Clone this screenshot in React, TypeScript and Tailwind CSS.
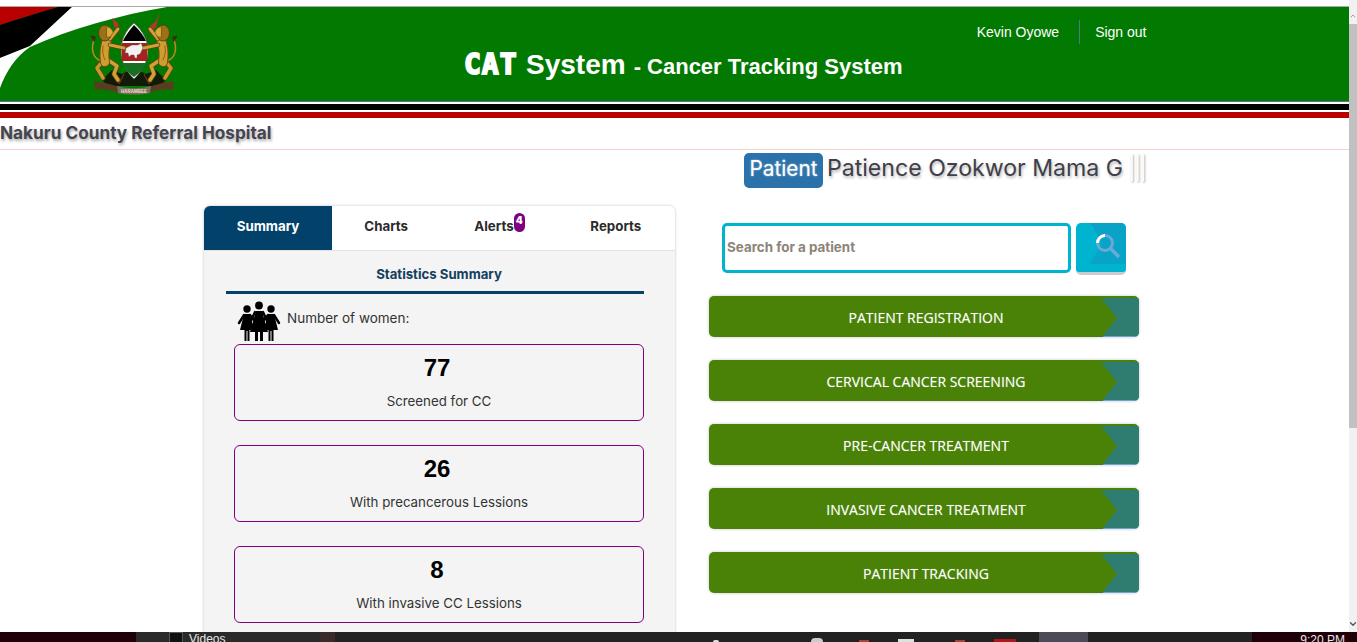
import React from "react";
import { ChevronUp, ChevronDown } from "lucide-react";

const stats = [
  { value: "77", label: "Screened for CC" },
  { value: "26", label: "With precancerous Lessions" },
  { value: "8", label: "With invasive CC Lessions" },
];

const actions = [
  "PATIENT REGISTRATION",
  "CERVICAL CANCER SCREENING",
  "PRE-CANCER TREATMENT",
  "INVASIVE CANCER TREATMENT",
  "PATIENT TRACKING",
];

function Swoosh() {
  return (
    <svg className="absolute left-0 top-0" width="170" height="95" viewBox="0 0 170 95">
      <path d="M0 0H58C38 6 18 12 0 18Z" fill="#b90000" />
      <path d="M58 0H72L30 39C20 43 10 47 0 51V18C18 12 38 6 58 0Z" fill="#000" />
      <path d="M72 0H167C120 8 70 22 30 40C15 50 6 65 0 81V51C10 47 20 43 30 39Z" fill="#fff" />
    </svg>
  );
}

function Lion() {
  return (
    <g fill="none" strokeLinecap="round" strokeLinejoin="round">
      {/* tail */}
      <path d="M13 49C4 46 3 36 6 28" stroke="#b98a1e" strokeWidth="1.500" />
      <path d="M6 29 3 24 7 25Z" fill="#3c2c0c" stroke="#3c2c0c" strokeWidth="1" />
      {/* back legs */}
      <path d="M14 50 9 56 15 66" stroke="#5a430f" strokeWidth="5" />
      <path d="M14 50 9 56 15 66" stroke="#c9962c" strokeWidth="3.500" />
      <path d="M20 48 29 54 26 62 30 68" stroke="#5a430f" strokeWidth="5" />
      <path d="M20 48 29 54 26 62 30 68" stroke="#d2a036" strokeWidth="3.500" />
      {/* body */}
      <path d="M19 28C16 36 16 44 17 50" stroke="#6e4f10" strokeWidth="10" />
      <path d="M19 28C16 36 16 44 17 50" stroke="#cf9d32" strokeWidth="8" />
      <path d="M15 34C14 39 15 44 17 48" stroke="#8c6716" strokeWidth="1" />
      {/* arms */}
      <path d="M22 27 30 17" stroke="#5a430f" strokeWidth="4.500" />
      <path d="M22 27 30 17" stroke="#d2a036" strokeWidth="3" />
      <path d="M22 33 36 36" stroke="#5a430f" strokeWidth="4.500" />
      <path d="M22 33 36 36" stroke="#d2a036" strokeWidth="3" />
      {/* head */}
      <ellipse cx="17" cy="21" rx="6.500" ry="8" fill="#9a7018" stroke="#4e3a0d" strokeWidth="0.800" />
      <path d="M19 15C22 15 25 18 25 21L22 25 19 25Z" fill="#dcaa3c" stroke="#6e4f10" strokeWidth="0.500" />
    </g>
  );
}

function CoatOfArms() {
  return (
    <svg className="mt-[5px] ml-[88px] shrink-0" width="92" height="86" viewBox="0 0 92 86">
      {/* spears */}
      <path d="M27 16 42 44" stroke="#5a3a1a" strokeWidth="1" />
      <path d="M24 6 30 11 31 20 27 17Z" fill="#b5352b" />
      <path d="M72 0 68 9 62 14 63 21 68 15Z" fill="#b5352b" />
      <path d="M63 20 50 44" stroke="#5a3a1a" strokeWidth="1" />
      {/* mountain */}
      <path d="M14 68 24 58 34 62 46 56 58 62 68 58 78 68 72 74H20Z" fill="#101c08" />
      <path d="M36 62 31 72M56 62 61 72" stroke="#b5352b" strokeWidth="0.800" />
      {/* shield */}
      <path d="M46 11C55 19 60 29 60 39C60 49 54 59 46 67C38 59 33 49 33 39C33 29 37 19 46 11Z" fill="#fff" stroke="#555" strokeWidth="0.600" />
      <path d="M46 13C52 19 56 24 58 29H35C37 24 41 19 46 13Z" fill="#000" />
      <path d="M34 31H59C59.500 35 59.500 44 59 49H34C33.500 44 33.500 35 34 31Z" fill="#a8201f" />
      <path d="M35 51H58C56 56 52 61 46 65C40 61 37 56 35 51Z" fill="#17701f" />
      {/* lions */}
      <Lion />
      <g transform="translate(92 0) scale(-1 1)"><Lion /></g>
      <path d="M38 36 44 33 50 33 53 31 55 36 52 42 49 43 49 46H47L46 43 43 43 41 45 40 41 37 41Z" fill="#f1f1f1" stroke="#555" strokeWidth="0.400" />
      {/* ribbon */}
      <g transform="translate(0 -3)">
        <path d="M6 73C14 72 20 75 28 77C40 80 52 80 64 77C72 75 78 72 86 73L85 81C76 79 72 81 64 83C52 86 40 86 28 83C20 81 15 79 7 81Z" fill="#5a3d1e" />
        <path d="M29 77C40 80 52 80 63 77L62 84C52 86 40 86 30 84Z" fill="#7a6f5e" />
        <text x="46" y="83.500" textAnchor="middle" fontSize="4.500" fontWeight="700" fill="#e8e2d0" fontFamily="'Liberation Sans', sans-serif">HARAMBEE</text>
      </g>
    </svg>
  );
}

function WomenIcon() {
  return (
    <svg width="46" height="44" viewBox="0 0 46 44" fill="#000" className="shrink-0">
      <circle cx="11" cy="11" r="3.700" />
      <circle cx="23" cy="7.500" r="3.900" />
      <circle cx="35" cy="11" r="3.700" />
      <g fill="none" stroke="#000" strokeWidth="2.400" strokeLinecap="round">
        <path d="M8 17 3 25M14 17 18 22" />
        <path d="M19 14 14 25M27 14 32 25" />
        <path d="M38 17 43 25M32 17 28 22" />
      </g>
      <path d="M8 16H14L18 32H13.500V43H11.500V33H10.500V43H8.500V32H4Z" />
      <path d="M20 13H26L32 34H27V43H24V34H22V43H19V34H14Z" />
      <path d="M32 16H38L42 32H37.500V43H35.500V33H34.500V43H32.500V32H28Z" />
    </svg>
  );
}

export default function App() {
  return (
    <div className="flex h-[642px] w-[1357px] flex-col overflow-hidden bg-white font-['Inter',sans-serif]">
      <div className="flex min-h-0 flex-1">
        <div className="min-w-0 flex-1 overflow-hidden">
          {/* Header band */}
          <div className="pt-[6px]">
            <header className="relative flex h-[96px] border-t border-b border-t-[#a9a9a9] border-b-[#51788a] bg-[#027a02]">
              <Swoosh />
              <div className="relative flex w-full items-start">
                <CoatOfArms />
                <h1 className="ml-[284px] mt-[41px] flex items-baseline font-['Liberation_Sans',sans-serif] font-bold text-white">
                  <span className="w-[55px] font-['DejaVu_Sans_Mono',monospace] text-[28px] leading-[34px] font-bold tracking-[1px] [-webkit-text-stroke:1.8px_white]">CAT</span>
                  <span className="ml-[7px] text-[28px] leading-[34px]">System</span>
                  <span className="ml-[8px] text-[22px] leading-[34px]">- Cancer Tracking System</span>
                </h1>
                <nav className="ml-[74px] mt-[13px] flex items-center font-['Liberation_Sans',sans-serif] text-[14px] text-white">
                  <span className="pr-[20px] leading-[24px]">Kevin Oyowe</span>
                  <span className="border-l border-[#51788a] pl-[15px] leading-[24px]">Sign out</span>
                </nav>
              </div>
            </header>
            {/* flag stripes */}
            <div className="mt-[2px] h-[6px] bg-black" />
            <div className="mt-[2px] h-[6px] bg-[#b90000]" />
          </div>

          {/* Hospital row */}
          <div className="flex h-[32px] items-center border-b border-[#f6cfcf]">
            <span className="pb-[2px] text-[17.2px] font-bold text-[#45454f] [text-shadow:1px_2px_3px_rgba(0,0,0,0.35)]">
              Nakuru County Referral Hospital
            </span>
          </div>

          {/* Patient heading */}
          <div className="ml-[744px] mt-[3px] flex h-[35px] items-center">
            <span className="flex h-[35px] w-[79px] items-center justify-center rounded-[5px] bg-[#2b72aa] pb-[4px] text-[20.8px] text-white [text-shadow:0_0_2px_rgba(255,255,255,0.6)]">
              Patient
            </span>
            <span className="ml-[4px] pb-[4px] text-[23.1px] text-[#3f3f4a] [text-shadow:1px_2px_3px_rgba(0,0,0,0.3)]">
              Patience Ozokwor Mama G
            </span>
            <span className="ml-[5px] pb-[4px] text-[23px] tracking-[-2px] text-white [text-shadow:1px_1px_2px_rgba(0,0,0,0.35)]">|||</span>
          </div>

          {/* Main columns */}
          <div className="ml-[204px] mt-[18px] flex items-start">
            <section className="w-[471px] overflow-hidden rounded-t-[6px] bg-[#f4f4f4] shadow-[0_0_3px_rgba(0,0,0,0.25)]">
              <div className="grid h-[44px] grid-cols-[128px_1fr_1fr_1fr] items-center bg-white pb-[2px] text-[13.3px] font-bold text-[#2b2b2b]">
                <div className="-mb-[2px] flex h-[44px] items-center justify-center bg-[#02426a] pb-[2px] text-white">Summary</div>
                <div className="pr-[6px] text-center">Charts</div>
                <div className="flex justify-center pr-[8px]">
                  <span>Alerts</span>
                  <span className="-mt-[4px] flex h-[19px] w-[11px] justify-center rounded-full bg-[#800080] text-[10px] leading-[14px] font-black text-white">4</span>
                </div>
                <div className="pr-[4px] text-center">Reports</div>
              </div>
              <div className="border-t border-[#e2e2e2]" />
              <div className="pl-[22px] pr-[31px]">
                <div className="h-[43px] border-b-[3px] border-[#02426a] pl-[8px] pt-[13px] text-center text-[13.2px] leading-[20px] font-bold text-[#13405f]">
                  Statistics Summary
                </div>
                <div className="ml-[10px] mt-[4px] flex h-[46px]">
                  <WomenIcon />
                  <span className="ml-[5px] pt-[11px] text-[13.5px] leading-[18px] text-[#333]">Number of women:</span>
                </div>
                <div className="flex flex-col gap-[24px] pb-[12px] pl-[8px]">
                  {stats.map((stat) => (
                    <div key={stat.label} className="flex h-[77px] flex-col items-center rounded-[6px] border border-[#800080] pt-[7px]">
                      <div className="pr-[4px] font-['Liberation_Sans',sans-serif] text-[24px] leading-[32px] font-bold text-black">{stat.value}</div>
                      <div className="mt-[7px] text-[13.3px] leading-[20px] text-[#333]">{stat.label}</div>
                    </div>
                  ))}
                </div>
              </div>
            </section>

            <section className="ml-[34px] w-[430px]">
              <div className="ml-[13px] mt-[17px] flex">
                <div className="flex h-[50px] w-[349px] items-center rounded-[5px] border-[3px] border-[#00b4d0] bg-white pb-[2px] pl-[2px] text-[13.4px] font-bold text-[#8c8478]">
                  Search for a patient
                </div>
                <button type="button" className="relative ml-[5px] h-[52px] w-[50px] overflow-hidden rounded-[5px] border-b-[3px] border-[#c8ccd0] bg-[#00b4d0]">
                  <svg className="absolute inset-0" width="50" height="49" viewBox="0 0 50 49">
                    <path d="M14 0H50V41H14L26 20Z" fill="#0aa3c8" />
                    <circle cx="29" cy="20" r="7.500" fill="none" stroke="#6aa8d6" strokeWidth="3" />
                    <path d="M21.500 20A7.500 7.500 0 0 1 29 12.500" fill="none" stroke="#fff" strokeWidth="3" />
                    <path d="M34.500 25.500 43 34" stroke="#6aa8d6" strokeWidth="3.500" />
                  </svg>
                </button>
              </div>
              <div className="mt-[21px] flex flex-col gap-[23px]">
                {actions.map((action) => (
                  <button
                    key={action}
                    type="button"
                    className="relative h-[41px] w-full overflow-hidden rounded-[5px] bg-[#4a8208] pt-[2px] font-['Open_Sans',sans-serif] text-[14px] text-white shadow-[0_0_3px_rgba(0,0,0,0.25)]"
                  >
                    <svg className="absolute right-0 top-0" width="38" height="42" viewBox="0 0 38 42">
                      <path d="M0 2H38V42H0L16 22Z" fill="#2f7d70" />
                      <path d="M3 40H38V42H0Z" fill="#6fa4cc" />
                    </svg>
                    <span className="relative pl-[4px] [text-shadow:0_0_1px_rgba(255,255,255,0.4)]">{action}</span>
                  </button>
                ))}
              </div>
            </section>
          </div>
        </div>

        {/* Browser scrollbar */}
        <div className="flex w-[8px] shrink-0 flex-col items-center bg-[#f1f1f1]">
          <div className="mt-[8px] flex h-[16px] items-center">
            <ChevronUp size={8} strokeWidth={3} className="text-[#a0a0a0]" />
          </div>
          <div className="h-[404px] w-full bg-[#c1c1c1]" />
          <div className="mt-auto flex h-[16px] items-center">
            <ChevronDown size={10} strokeWidth={3} className="text-[#505050]" />
          </div>
        </div>
      </div>

      {/* Windows taskbar, cut off by the screenshot */}
      <div className="flex h-[10px] shrink-0 overflow-hidden bg-[#222222] font-['Liberation_Sans',sans-serif] text-[12px] text-[#e8e8e8]">
        <div className="w-[136px] bg-[#1f0008]" />
        <div className="flex w-[184px] bg-[#2a2a2a] pl-[34px]">
          <div className="mt-[1px] h-[9px] w-[12px] bg-[#111] outline outline-1 outline-[#555]" />
          <span className="ml-[7px] leading-[14px]">Videos</span>
        </div>
        <div className="w-[15px] bg-[#3a2a2a]" />
        <div className="ml-[378px] mt-[8px] h-[2px] w-[6px] rounded-t-full bg-[#ddd]" />
        <div className="ml-[92px] mt-[6px] h-[4px] w-[12px] rounded-t-full bg-[#ccc]" />
        <div className="ml-[36px] mt-[8px] h-[2px] w-[10px] bg-[#a8452a]" />
        <div className="ml-[29px] mt-[7px] h-[3px] w-[16px] bg-[#d8e4dc]" />
        <div className="ml-[41px] mt-[8px] h-[2px] w-[10px] bg-[#a8452a]" />
        <div className="ml-[29px] mt-[7px] h-[3px] w-[22px] bg-[#b01818]" />
        <div className="ml-[23px] h-full w-[49px] bg-[#4d4a58]" />
        <div className="ml-auto flex w-[105px] justify-end bg-[#1f0008] pr-[12px]">
          <span className="mt-[1px] leading-[14px]">9:20 PM</span>
        </div>
      </div>
    </div>
  );
}
